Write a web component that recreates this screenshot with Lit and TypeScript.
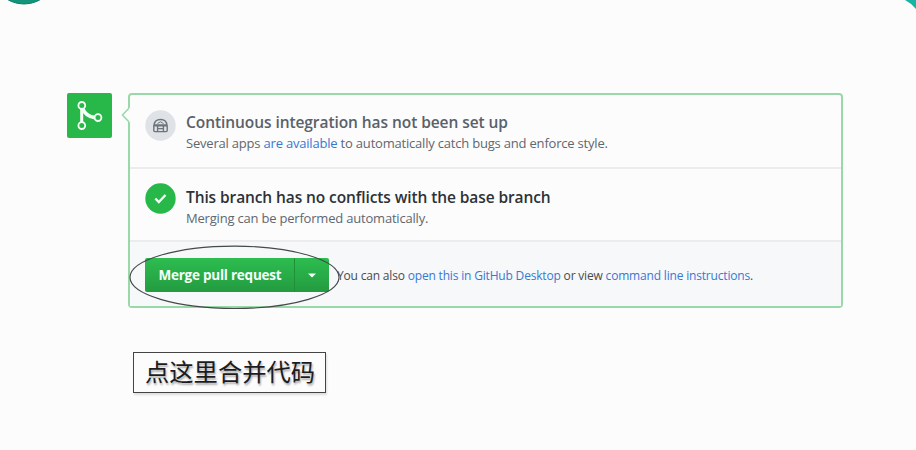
import { LitElement, html, css } from "lit";
import { customElement } from "lit/decorators.js";

@customElement("app-root")
export class AppRoot extends LitElement {
  static styles = css`
    :host {
      display: block;
      position: relative;
      box-sizing: border-box;
      width: 916px;
      height: 450px;
      padding: 93px 0 0 67px;
      overflow: hidden;
      background: #fcfcfd;
      font-family: "Open Sans", "Noto Sans", sans-serif;
      color: #60676f;
    }
    svg { display: block; }
    .corner { position: absolute; top: 0; left: 0; }
    .merge { display: flex; gap: 16px; }
    .badge {
      width: 45px;
      height: 45px;
      border-radius: 2px;
      background: #28b84a;
    }
    .panel {
      position: relative;
      box-sizing: border-box;
      width: 715px;
      height: 215px;
      border: 2px solid #98d8a9;
      border-radius: 4px;
    }
    .pointer { position: absolute; left: -9px; top: 11px; }
    .row {
      display: flex;
      box-sizing: border-box;
      height: 74px;
      padding: 15px 0 0 15px;
      gap: 10px;
      border-bottom: 2px solid #ececee;
    }
    .row.second { height: 73px; padding-top: 14px; }
    .status { flex: none; }
    .lines { display: flex; flex-direction: column; padding-top: 1px; white-space: nowrap; }
    .second .lines { padding-top: 3px; }
    .title { font-size: 15.5px; line-height: 22px; font-weight: 600; color: #596169; }
    .title.dark { color: #2d3237; }
    .note { font-size: 13px; line-height: 20px; letter-spacing: -0.2px; }
    .link { color: #3977d3; }
    .t1 { letter-spacing: -0.07px; }
    .t2 { letter-spacing: -0.1px; }
    .footer {
      display: flex;
      align-items: center;
      box-sizing: border-box;
      height: 64px;
      padding-left: 15px;
      padding-top: 2px;
      gap: 8px;
      background: #f6f8fa;
      white-space: nowrap;
    }
    .button {
      display: flex;
      width: 184px;
      height: 34px;
      border-radius: 2px;
      background: linear-gradient(#2dbd50, #239b40);
      color: #f6fff8;
    }
    .label {
      box-sizing: border-box;
      width: 150px;
      padding-left: 13.5px;
      border-right: 1px solid #1f9139;
      font-size: 13.5px;
      font-weight: 700;
      line-height: 35px;
      letter-spacing: -0.24px;
    }
    .more { flex: 1; display: flex; align-items: center; justify-content: center; }
    .hint { font-size: 12px; letter-spacing: -0.18px; color: #454b51; }
    .ring { position: absolute; left: 129px; top: 244px; }
    .caption {
      box-sizing: border-box;
      width: 193px;
      height: 41px;
      margin: 44px 0 0 66px;
      padding-left: 11px;
      border: 1.5px solid #444;
      box-shadow: 1px 2px 2px #ddd;
      font: 24.3px/35px "Noto Sans CJK SC", sans-serif;
      color: #1c1c1e;
      text-shadow: 1px 2px 2px #aaa;
      white-space: nowrap;
    }
  `;

  render() {
    return html`
      <svg class="corner" width="916" height="20">
        <circle cx="24" cy="-29" r="33" fill="#13957c" stroke="#0c7f6c" />
        <path d="M905 0Q911 3 916 9V0Z" fill="#17b3a3" />
      </svg>
      <div class="merge">
        <div class="badge">
          <svg width="45" height="45" fill="none" stroke="#f4fff6">
            <path d="M14.7 15.5V29" stroke-width="3" />
            <path d="M15.5 15.5C18 21.5 22 24 28 24.6" stroke-width="3.6" />
            <g stroke-width="1.8" fill="#28b84a">
              <circle cx="14.8" cy="12.4" r="3.4" />
              <circle cx="14.8" cy="32.6" r="3.4" />
              <circle cx="31" cy="24.6" r="3.4" />
            </g>
          </svg>
        </div>
        <div class="panel">
          <svg class="pointer" width="10" height="18">
            <path d="M9 1L1.5 9L9 17" fill="#fcfcfd" stroke="#98d8a9" stroke-width="1.5" />
            <path d="M9.5 1.5V16.5" stroke="#fcfcfd" stroke-width="2" />
          </svg>
          <div class="row">
            <svg class="status" width="31" height="31">
              <circle cx="15.5" cy="15.5" r="15.2" fill="#dfe2e6" />
              <g fill="none" stroke="#6c747c" stroke-width="1.4">
                <path d="M9.2 15.5C9.2 11.5 12 9.5 15.5 9.5S21.8 11.5 21.8 15.5" />
                <path d="M12.5 13.5L15.5 11.8L18.5 13.5" stroke-width="1" />
                <rect x="8.8" y="15" width="13.4" height="6.6" rx="1" />
                <path d="M8.8 15.8H22.2M12.6 16V21M18.4 16V21M12.6 18.6H18.4" />
              </g>
            </svg>
            <div class="lines">
              <div class="title"><span class="t1">Continuous integration has not been set up</span></div>
              <div class="note">Several apps <span class="link">are available</span> to automatically catch bugs and enforce style.</div>
            </div>
          </div>
          <div class="row second">
            <svg class="status" width="31" height="31">
              <circle cx="15.5" cy="15.5" r="15.2" fill="#28b84a" />
              <path d="M10.3 15.5L13.8 19L20.5 12" fill="none" stroke="#f4fff6" stroke-width="2.3" />
            </svg>
            <div class="lines">
              <div class="title dark"><span class="t2">This branch has no conflicts with the base branch</span></div>
              <div class="note">Merging can be performed automatically.</div>
            </div>
          </div>
          <div class="footer">
            <div class="button">
              <div class="label"><span>Merge pull request</span></div>
              <div class="more"><svg width="8" height="5"><path d="M0 .5H8L4 4.5Z" fill="#f6fff8" /></svg></div>
            </div>
            <span class="hint">You can also <span class="link">open this in GitHub Desktop</span> or view <span class="link">command line instructions</span>.</span>
          </div>
        </div>
      </div>
      <svg class="ring" width="212" height="66">
        <ellipse cx="105.5" cy="33.3" rx="104.5" ry="31.2" fill="none" stroke="#454948" stroke-width="1.1" />
      </svg>
      <div class="caption">点这里合并代码</div>
    `;
  }
}
